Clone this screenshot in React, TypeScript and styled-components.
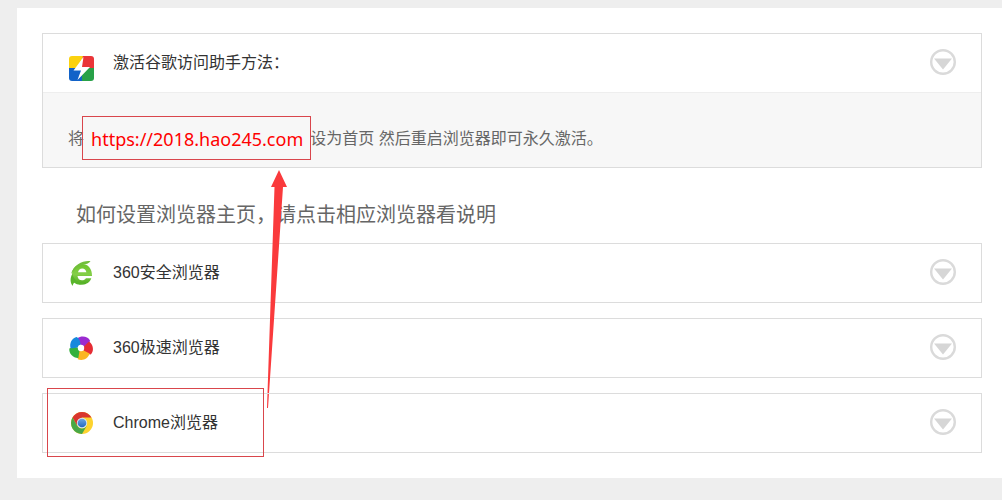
import React, { useState } from "react";
import styled, { createGlobalStyle } from "styled-components";

const GlobalStyle = createGlobalStyle`
  *, *::before, *::after { box-sizing: border-box; }
  body {
    margin: 0;
    background: #eee;
    color: #333;
    font: 16px/24px "Liberation Sans", "Noto Sans CJK SC", sans-serif;
  }
`;

const Page = styled.div`
  padding: 8px 0 22px 17px;
`;

const Panel = styled.main`
  padding: 25px 20px 25px 25px;
  background: #fff;
`;

const Card = styled.section`
  border: 1px solid #dcdcdc;
`;

const CardList = styled.div`
  display: flex;
  flex-direction: column;
  gap: 15px;
`;

const Header = styled.button`
  display: flex;
  align-items: center;
  width: 100%;
  height: 58px;
  padding: 0 25px;
  border: 0;
  background: transparent;
  color: inherit;
  font: inherit;
  text-align: left;
  cursor: pointer;
`;

const IconSlot = styled.span<{ $low?: boolean }>`
  display: flex;
  flex: none;
  width: 45px;
  padding-top: ${(p) => (p.$low ? 10 : 0)}px;
`;

const Title = styled.span`
  flex: 1;
`;

const Body = styled.div`
  display: flex;
  flex-wrap: wrap;
  align-items: center;
  padding: 32px 25px 14px;
  border-top: 1px solid #eee;
  background: #f7f7f7;
  color: #666;
  line-height: 28px;
`;

const Highlight = styled.span`
  position: relative;
  margin: 0 7px;
`;

const HomeLink = styled.a`
  display: block;
  color: #f00;
  font-family: "Noto Sans", sans-serif;
  font-size: 18px;
  text-decoration: none;
`;

const Frame = styled.span`
  position: absolute;
  inset: -9px -8px -7px -9px;
  border: 1px solid #d9464c;
  pointer-events: none;
`;

const Arrow = styled.svg`
  position: absolute;
  top: 100%;
  right: 14px;
  margin-top: 17px;
  pointer-events: none;
`;

const Heading = styled.h2`
  margin: 0;
  padding: 33px 34px 13px;
  color: #666;
  font-size: 20px;
  font-weight: 400;
  line-height: 29px;
`;

const Marked = styled.div`
  position: relative;
`;

const MarkFrame = styled.span`
  position: absolute;
  left: 5px;
  top: -5px;
  width: 217px;
  height: 69px;
  border: 1px solid #d9464c;
  pointer-events: none;
`;

const ChevronSvg = styled.svg`
  flex: none;
  margin-bottom: 2px;
`;

const Chevron = () => (
  <ChevronSvg width="26" height="26" viewBox="0 0 26 26" aria-hidden="true">
    <circle cx="13" cy="13" r="11.800" fill="none" stroke="#dadada" strokeWidth="2.400" />
    <path d="M4 9.500h18L13 20.500z" fill="#d6d6d6" />
  </ChevronSvg>
);

const BoltIcon = () => (
  <svg width="27" height="26" viewBox="0 0 27 26" aria-hidden="true">
    <clipPath id="tile"><rect x="1" y="1" width="25" height="25" rx="3" /></clipPath>
    <g clipPath="url(#tile)">
      <path d="M0 0h16L9 14H0z" fill="#fbd20f" />
      <path d="M15 0h12v13H13z" fill="#ea3538" />
      <path d="M0 13h15v13H0z" fill="#1262c8" />
      <path d="M14 13h13v13H14z" fill="#28a148" />
    </g>
    <path d="M15.500 2 5.500 15.500h7.500L9.500 25l12.500-13h-8z" fill="#fff" />
  </svg>
);

const SafeIcon = () => (
  <svg width="26" height="26" viewBox="0 0 26 26" aria-hidden="true">
    <defs>
      <linearGradient id="leaf" x1="0" y1="0" x2="0" y2="1">
        <stop offset="0" stopColor="#6cc32b" />
        <stop offset=".5" stopColor="#85cf48" />
        <stop offset="1" stopColor="#4dab20" />
      </linearGradient>
    </defs>
    <path
      fill="url(#leaf)"
      fillRule="evenodd"
      d="M24 16H9.500c.3 2.800 2 4.200 4.500 4.200 1.700 0 3-.6 3.900-2h5.400c-1.400 4-4.800 6.300-9.300 6.300C8 24.500 4 20.300 4 14.500 4 8.300 8.200 4 14 4c6 0 10.200 4.500 10 12zM10 12.300h8.400c-.4-2.500-1.900-3.900-4.200-3.900-2.200 0-3.700 1.400-4.200 3.900z"
    />
    <path fill="#72bf3d" d="M22.500 1.200C16 0 5.500 4.500 3 14 7 8 12.500 4.800 18 4c1.800-.3 3.300-1.300 4.500-2.800z" />
    <path fill="#59b52b" d="M4.300 14C1.800 18 2.200 23 4.800 26c0-1.400.4-2.400 1.400-3.200 3 2.200 7.400 2.600 11 .4-6.800.2-11.600-3.600-12.900-9.200z" />
  </svg>
);

const petals = ["#9b2bd0", "#e52c34", "#fbb522", "#35b13d", "#1689dd"];

const SpeedIcon = () => (
  <svg width="26" height="26" viewBox="0 0 26 26" aria-hidden="true">
    {petals.map((color, i) => (
      <path
        key={color}
        transform={`rotate(${i * 72 + 8} 13 13)`}
        fill={color}
        d="M12.500 10.500 8 4C11.500.3 18 .3 21 4.500c-.6 3-2.600 5.500-6 7z"
      />
    ))}
    <circle cx="13" cy="13" r="3.200" fill="#fff" />
  </svg>
);

const ChromeIcon = () => (
  <svg width="26" height="26" viewBox="0 0 26 26" aria-hidden="true">
    <defs>
      <linearGradient id="hub" x1="0" y1="0" x2="0" y2="1">
        <stop offset="0" stopColor="#6ba6e4" />
        <stop offset="1" stopColor="#2468c0" />
      </linearGradient>
    </defs>
    <circle cx="14" cy="13" r="11" fill="#fdd32f" />
    <path d="M4.500 7.500A11 11 0 0 1 23.500 7.500H14L9.200 15.700z" fill="#d9352f" />
    <path d="M4.500 7.500A11 11 0 0 0 14 24l4.800-8.300a5.500 5.500 0 0 1-9.600 0z" fill="#49a846" />
    <circle cx="14" cy="13" r="5.200" fill="#dce8f0" />
    <circle cx="14" cy="13" r="4.300" fill="url(#hub)" />
  </svg>
);

type RowProps = {
  icon: React.ReactNode;
  title: string;
  low?: boolean;
  defaultOpen?: boolean;
  children?: React.ReactNode;
};

function Row({ icon, title, low, defaultOpen = false, children }: RowProps) {
  const [open, setOpen] = useState(defaultOpen);
  return (
    <Card>
      <Header type="button" aria-expanded={open} onClick={() => setOpen(!open)}>
        <IconSlot $low={low}>{icon}</IconSlot>
        <Title>{title}</Title>
        <Chevron />
      </Header>
      {open && children ? <Body>{children}</Body> : null}
    </Card>
  );
}

export default function App() {
  return (
    <>
      <GlobalStyle />
      <Page>
        <Panel>
          <Row icon={<BoltIcon />} title="激活谷歌访问助手方法：" low defaultOpen>
            将
            <Highlight>
              <HomeLink href="https://2018.hao245.com">https://2018.hao245.com</HomeLink>
              <Frame />
              <Arrow width="22" height="240" viewBox="0 0 22 240" aria-hidden="true">
                <path d="M12 0 20 17H16L1 238H0L7.500 17H4z" fill="#fa3a3c" />
              </Arrow>
            </Highlight>
            设为首页 然后重启浏览器即可永久激活。
          </Row>
          <Heading>如何设置浏览器主页，请点击相应浏览器看说明</Heading>
          <CardList>
            <Row icon={<SafeIcon />} title="360安全浏览器" />
            <Row icon={<SpeedIcon />} title="360极速浏览器" />
            <Marked>
              <Row icon={<ChromeIcon />} title="Chrome浏览器" />
              <MarkFrame />
            </Marked>
          </CardList>
        </Panel>
      </Page>
    </>
  );
}
